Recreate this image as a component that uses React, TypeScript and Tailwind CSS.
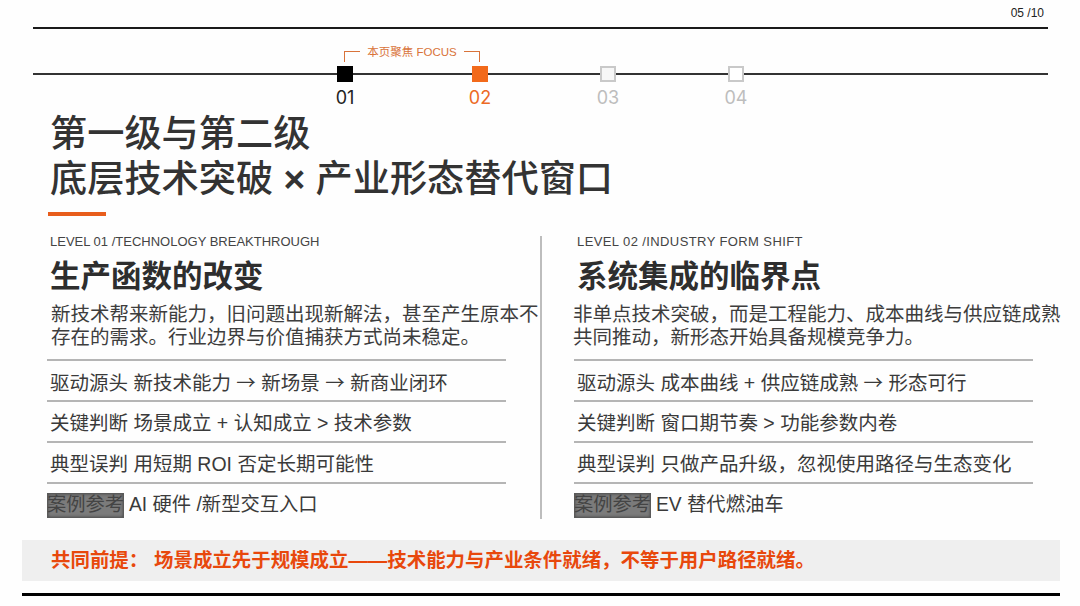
const fontStack = "font-['Liberation_Sans','Noto_Sans_CJK_SC',sans-serif]";

const steps = [
  { id: "01", box: "bg-black border-black", text: "text-[#222222]", gap: "w-[119px]", label: "w-[135px]" },
  { id: "02", box: "bg-[#f26a1b] border-[#f26a1b]", text: "text-[#ec6a25]", gap: "w-[112px]", label: "w-[128px]" },
  { id: "03", box: "bg-[#f7f7f7] border-[#c9c9c9]", text: "text-[#bdbdbd]", gap: "w-[112px]", label: "w-[128px]" },
  { id: "04", box: "bg-white border-[#c9c9c9]", text: "text-[#bdbdbd]", gap: "", label: "w-[16px]" },
];

const columns = [
  {
    level: "LEVEL 01 /TECHNOLOGY BREAKTHROUGH",
    levelTracking: "tracking-normal",
    title: "生产函数的改变",
    intro: ["新技术帮来新能力，旧问题出现新解法，甚至产生原本不", "存在的需求。行业边界与价值捕获方式尚未稳定。"],
    introIndent: "pl-1",
    rows: ["驱动源头 新技术能力 → 新场景 → 新商业闭环", "关键判断 场景成立 + 认知成立 > 技术参数", "典型误判 用短期 ROI 否定长期可能性"],
    example: "AI 硬件 /新型交互入口",
  },
  {
    level: "LEVEL 02 /INDUSTRY FORM SHIFT",
    levelTracking: "tracking-[0.4px]",
    title: "系统集成的临界点",
    intro: ["非单点技术突破，而是工程能力、成本曲线与供应链成熟", "共同推动，新形态开始具备规模竞争力。"],
    introIndent: "-ml-px",
    rows: ["驱动源头 成本曲线 + 供应链成熟 → 形态可行", "关键判断 窗口期节奏 > 功能参数内卷", "典型误判 只做产品升级，忽视使用路径与生态变化"],
    example: "EV 替代燃油车",
  },
];

function Timeline() {
  return (
    <div className="ml-[33px] w-[1015px]">
      <div className="ml-[311px] flex h-[11px] w-[136px] items-start justify-between">
        <div className="h-[11px] w-[16px] border-l border-t border-[#d9733a]" />
        <span className="-mt-[6px] text-[11.5px] leading-[14px] whitespace-nowrap text-[#d9733a]">本页聚焦 FOCUS</span>
        <div className="h-[11px] w-[16px] border-r border-t border-[#d9733a]" />
      </div>
      <div className="mt-[4px] flex items-center">
        <div className="h-[2px] w-[304px] bg-[#333333]" />
        {steps.map((s) => (
          <div key={s.id} className={s.gap ? "flex items-center" : "flex flex-1 items-center"}>
            <div className={`h-[16px] w-[16px] border-2 ${s.box}`} />
            <div className={`h-[2px] bg-[#333333] ${s.gap || "flex-1"}`} />
          </div>
        ))}
      </div>
      <div className="mt-[6px] ml-[304px] flex font-['Inter',sans-serif] text-[18px] leading-[20px]">
        {steps.map((s) => (
          <div key={s.id} className={`${s.label} ${s.text}`}>
            <div className="flex w-[16px] justify-center whitespace-nowrap">{s.id}</div>
          </div>
        ))}
      </div>
    </div>
  );
}

function Row({ text }: { text: string }) {
  const parts = text.split("→");
  return (
    <div className="flex h-[41px] items-center border-t-2 border-[#b5b5b5] pt-[4px] pl-[3px] text-[19.5px] text-[#3a3a3a] whitespace-pre">
      <span>
        {parts.map((part, i) => (
          <span key={part}>
            {i > 0 && <span className="font-['Noto_Sans_CJK_SC',sans-serif]">→</span>}
            {part}
          </span>
        ))}
      </span>
    </div>
  );
}

function Column({ col }: { col: (typeof columns)[number] }) {
  return (
    <div className="w-[459px] shrink-0">
      <p className={`pl-[3px] text-[13px] leading-[16px] text-[#444444] whitespace-nowrap ${col.levelTracking}`}>{col.level}</p>
      <h2 className="mt-[6px] pl-[3px] text-[30.5px] leading-[40px] font-bold text-[#2e2e2e] whitespace-nowrap">{col.title}</h2>
      <div className={`mt-[7px] text-[19.5px] leading-[23px] text-[#3d3d3d] whitespace-nowrap ${col.introIndent}`}>
        {col.intro.map((line) => (
          <p key={line}>{line}</p>
        ))}
      </div>
      <div className="mt-[10px]">
        {col.rows.map((row) => (
          <Row key={row} text={row} />
        ))}
      </div>
      <div className="flex h-[35px] items-center border-t-2 border-[#b5b5b5] pt-[9px] text-[19.3px] text-[#3a3a3a] whitespace-nowrap">
        <span className="flex h-[25px] w-[77px] items-center justify-center border border-[#5a5a5a] bg-[#7b7b7b] text-[#444444] shadow-[inset_0_0_3px_#444444]">案例参考</span>
        <span className="ml-[5px]">{col.example}</span>
      </div>
    </div>
  );
}

export default function App() {
  return (
    <div className={`h-[606px] w-[1080px] overflow-hidden bg-[#fefefe] ${fontStack}`}>
      <div className="flex h-[27px] w-[1044px] items-start justify-end pt-[7px] text-[12px] leading-[13px] text-[#222222]">05 /10</div>
      <div className="ml-[33px] h-[2px] w-[1015px] bg-[#1a1a1a]" />
      <div className="h-[22px]" />
      <Timeline />

      <h1 className="mt-[4px] ml-[50px] text-[37.2px] leading-[45px] font-medium text-[#333333] whitespace-nowrap">
        <span className="block">第一级与第二级</span>
        <span className="block">底层技术突破 <span className="font-bold">×</span> 产业形态替代窗口</span>
      </h1>
      <div className="mt-[10px] ml-[48px] h-[4px] w-[58px] bg-[#e85d1c]" />

      <div className="mt-[18px] ml-[47px] flex">
        <Column col={columns[0]} />
        <div className="mt-[2px] ml-[34px] h-[283px] w-[2px] shrink-0 bg-[#bdbdbd]" />
        <div className="ml-[32px]">
          <Column col={columns[1]} />
        </div>
      </div>

      <div className="mt-[21px] ml-[22px] flex h-[41px] w-[1038px] items-center bg-[#efefef] pl-[29px] text-[19.45px] font-bold text-[#e8480c] whitespace-nowrap">
        <span className="w-[103px]">共同前提：</span>
        <span>场景成立先于规模成立——技术能力与产业条件就绪，不等于用户路径就绪。</span>
      </div>
      <div className="mt-[12px] ml-[22px] h-[3px] w-[1038px] bg-black" />
    </div>
  );
}
